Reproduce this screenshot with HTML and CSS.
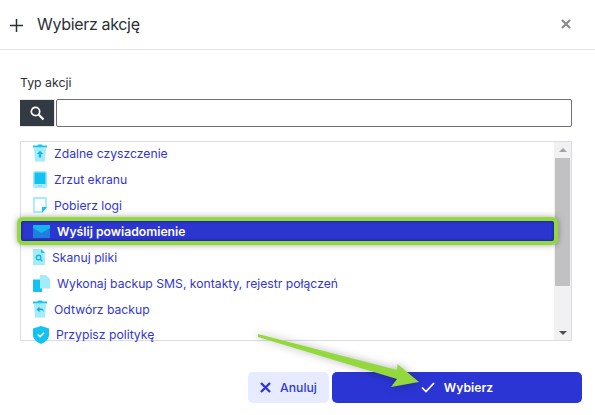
FILE: index.html
```html
<!DOCTYPE html>
<html lang="pl">
<head>
<meta charset="utf-8">
<title>Wybierz akcję</title>
<link rel="stylesheet" href="styles.css">
</head>
<body>
<div class="dialog">
  <header class="head">
    <svg class="plus" viewBox="0 0 13 13" width="13" height="13"><path d="M6.500 0v13M0 6.500h13" stroke="#2b2f36" stroke-width="1.500" fill="none"/></svg>
    <h1 class="title">Wybierz akcję</h1>
    <svg class="close" viewBox="0 0 10 10" width="10" height="10"><path d="M1 1l8 8M9 1l-8 8" stroke="#8a8a8a" stroke-width="2.200" fill="none"/></svg>
  </header>
  <main class="body">
    <div class="label">Typ akcji</div>
    <div class="search">
      <div class="search-btn">
        <svg viewBox="0 0 16 16" width="16" height="16"><circle cx="6.500" cy="6.500" r="4.200" stroke="#fff" stroke-width="1.700" fill="none"/><path d="M9.800 9.800l4.700 4.700" stroke="#fff" stroke-width="2.200" fill="none"/></svg>
      </div>
      <input class="search-input" type="text">
    </div>
    <div class="list">
      <div class="rows">
        <div class="row"><span class="ico w34"><svg viewBox="0 0 14 18" width="14" height="18"><path d="M5 .5h4l.5 1H14v2H0v-2h4.500z" fill="#18c4f0"/><path d="M1 4h12l-1 13.500H2z" fill="#a5ecfb"/><path d="M7 6.500l3.200 3.500H8.200v3.500H5.800V10H3.800z" fill="#18b8e8"/></svg></span>Zdalne czyszczenie</div>
        <div class="row"><span class="ico w34"><svg viewBox="0 0 14 17" width="14" height="17"><rect width="14" height="17" rx="2" fill="#a5ecfb"/><rect x="1.500" y="1.500" width="11" height="11.500" fill="#12c3f0"/><rect x="5" y="14.500" width="4" height="1" fill="#7fdcf5"/></svg></span>Zrzut ekranu</div>
        <div class="row"><span class="ico w34"><svg viewBox="0 0 14 16" width="14" height="16"><path d="M1 1h12v9l-4.500 5H1z" fill="#fff" stroke="#a5ecfb" stroke-width="1.800"/><path d="M9 10h5l-5 6z" fill="#12c3f0"/></svg></span>Pobierz logi</div>
        <div class="row active"><span class="ico w37"><svg viewBox="0 0 17 13" width="17" height="13"><path d="M0 2h17v11H0z" fill="#1e7fe0"/><path d="M0 0h17v3l-8.500 5L0 3z" fill="#16b5ee"/></svg></span>Wyślij powiadomienie</div>
        <div class="row"><span class="ico w32"><svg viewBox="0 0 12 16" width="12" height="16"><path d="M0 0h8l4 4v12H0z" fill="#a5ecfb"/><path d="M8 0l4 4H8z" fill="#18c4f0"/><circle cx="5.600" cy="8.500" r="2.300" fill="none" stroke="#12b5e6" stroke-width="1.400"/><path d="M7.300 10.200l2 2" stroke="#12b5e6" stroke-width="1.400"/></svg></span>Skanuj pliki</div>
        <div class="row"><span class="ico w37"><svg viewBox="0 0 17 17" width="17" height="17"><path d="M0 4.500h9V17H1a1 1 0 0 1-1-1z" fill="#12c3f0"/><path d="M7 0h6l4 4v9.500H7z" fill="#a5ecfb"/></svg></span>Wykonaj backup SMS, kontakty, rejestr połączeń</div>
        <div class="row"><span class="ico w34"><svg viewBox="0 0 14 18" width="14" height="18"><path d="M5 .5h4l.5 1H14v2H0v-2h4.500z" fill="#18c4f0"/><path d="M1 4h12l-1 13.500H2z" fill="#a5ecfb"/><path d="M3.500 9.500l3-3v2h2c1.500 0 2.200 1.500 2.200 3.500-.7-1.300-1.400-1.700-2.500-1.700H6.500v2z" fill="#18a8dc"/></svg></span>Odtwórz backup</div>
        <div class="row"><span class="ico w36"><svg viewBox="0 0 16 18" width="16" height="18"><path d="M8 0l8 2.500V9c0 4-4 7.500-8 9-4-1.500-8-5-8-9V2.500z" fill="#12c3f0"/><path d="M4.800 8.500l2.300 2.300 4-4" stroke="#fff" stroke-width="1.500" fill="none"/></svg></span>Przypisz politykę</div>
      </div>
      <div class="scrollbar">
        <span class="arrow up"></span>
        <div class="track"><div class="thumb"></div></div>
        <span class="arrow down"></span>
      </div>
    </div>
  </main>
  <footer class="foot">
    <button class="btn cancel"><svg viewBox="0 0 11 11" width="11" height="11"><path d="M1 1l9 9M10 1l-9 9" stroke="#2e37d4" stroke-width="2.400" fill="none"/></svg>Anuluj</button>
    <button class="btn ok"><svg viewBox="0 0 14 11" width="14" height="11"><path d="M1 5.500l4 4 8-8.500" stroke="#fff" stroke-width="1.700" fill="none"/></svg>Wybierz</button>
  </footer>
  <svg class="pointer" viewBox="0 0 595 415" width="595" height="415"><polygon points="258,334 397,370 397.500,364 419,382 391,387 397,379 258,337" fill="#93d83c"/></svg>
</div>
</body>
</html>
```
FILE: styles.css
```css
* { box-sizing: border-box; }
html, body { margin: 0; padding: 0; }
body { width: 595px; height: 415px; background: #fff; font-family: Inter, "Liberation Sans", sans-serif; overflow: hidden; }
.dialog { position: relative; width: 595px; height: 415px; display: flex; flex-direction: column; }
.head { height: 50px; flex: none; display: flex; align-items: center; padding: 0 24px 0 10px; border-bottom: 1px solid #e2e2e2; }
.plus { flex: none; margin-top: 1px; }
.title { flex: 1; margin: 0 0 2px 14px; font-size: 16px; font-weight: 400; color: #2b2f36; letter-spacing: -.33px; }
.close { flex: none; margin-top: -2px; }
.body { flex: none; height: 291px; padding: 24px 23px 0 20px; display: flex; flex-direction: column; }
.label { font-size: 12.300px; line-height: 17px; color: #2b2f36; height: 25px; }
.search { display: flex; height: 28px; flex: none; }
.search-btn { width: 35px; background: #343a44; display: flex; align-items: center; justify-content: center; flex: none; border: 1px solid #e4e4e4; border-width: 1px 1px 1px 0; }
.search-input { flex: 1; min-width: 0; margin-left: 1px; border: 1px solid #6f6f6f; border-radius: 2px; background: #fff; outline: 0; padding: 0; }
.list { margin-top: 14px; height: 200px; border: 1px solid #dcdce4; display: flex; position: relative; }
.rows { flex: 1; min-width: 0; height: 198px; }
.row { height: 26px; display: flex; align-items: center; font-size: 12.200px; color: #3236cf; white-space: nowrap; overflow: hidden; }
.row:first-child { margin-top: -2px; }
.rows .row:last-child { height: 22px; align-items: flex-start; padding-top: 5px; }
.rows .row:last-child .ico { margin-top: -1px; }
.ico { display: flex; align-items: center; padding-left: 12px; flex: none; }
.w32 { width: 31px; }
.w34 { width: 33px; }
.w36 { width: 35px; }
.w37 { width: 36px; }
.active { position: relative; z-index: 2; margin: -1px -4px; height: 28px; color: #fff; font-weight: 600; background: #2b35cf; border: 4px solid #93d83c; border-radius: 6px; box-shadow: 0 0 6px rgba(0,0,0,.35), inset 0 0 3px #14196e; width: calc(100% + 8px); }
.scrollbar { width: 17px; flex: none; background: #f1f1f1; display: flex; flex-direction: column; align-items: center; position: relative; z-index: 1; }
.arrow { flex: none; width: 0; height: 0; border-left: 4px solid transparent; border-right: 4px solid transparent; }
.up { margin-top: 6px; border-bottom: 4px solid #a3a3a3; }
.down { margin-bottom: 5px; border-top: 4px solid #505050; }
.track { flex: 1; width: 100%; padding: 6px 1px 0; }
.thumb { height: 128px; background: #c1c1c1; }
.foot { flex: 1; display: flex; justify-content: flex-end; gap: 3px; padding: 31px 13px 0 0; }
.btn { height: 31px; border: 0; border-radius: 5px; font: 600 12.200px Inter, "Liberation Sans", sans-serif; display: flex; align-items: center; justify-content: center; padding: 0; }
.cancel { width: 81px; background: #e6ebff; color: #3339cf; font-weight: 500; gap: 9px; }
.ok { width: 250px; background: #2b35d3; color: #fff; gap: 9px; }
.pointer { position: absolute; left: 0; top: 0; pointer-events: none; filter: drop-shadow(0 0 4px rgba(0,0,0,.3)); }
```
